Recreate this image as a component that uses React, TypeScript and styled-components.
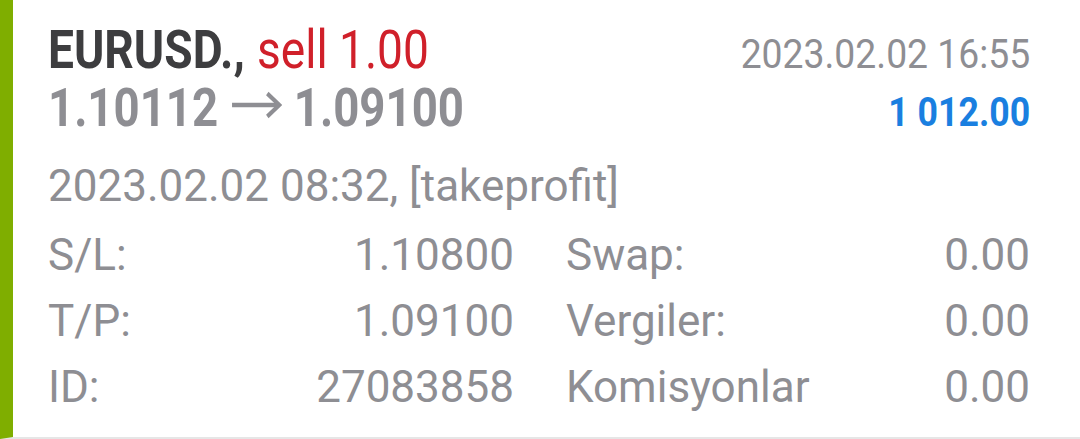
import * as React from "react"
import styled, { createGlobalStyle } from "styled-components"

const GlobalStyle = createGlobalStyle`
  html, body {
    margin: 0;
    padding: 0;
    background: #ffffff;
  }
  body {
    font-family: Roboto, "Liberation Sans", sans-serif;
  }
`

const Card = styled.div`
  box-sizing: border-box;
  height: 439px;
  width: 1080px;
  border-left: 13px solid #7fae00;
  border-bottom: 2px solid #e6e6e6;
  padding: 21px 50px 0 35px;
  background: #fff;
`

const HeadRow = styled.div`
  display: flex;
  justify-content: space-between;
  align-items: baseline;
  height: 58px;
`

// condensed look: Roboto squeezed horizontally
const Condensed = styled.span<{ $size: number; $scale: number; $right?: boolean }>`
  display: inline-block;
  white-space: nowrap;
  font-size: ${p => p.$size}px;
  line-height: 58px;
  transform: scaleX(${p => p.$scale});
  transform-origin: ${p => (p.$right ? "right" : "left")} center;
`

const Symbol = styled.span`
  font-weight: 700;
  color: #3d3d3f;
`

const Side = styled.span`
  font-weight: 400;
  color: #d0202a;
  margin-left: 14px;
`

const Prices = styled.span`
  font-weight: 700;
  color: #8e8e93;
`

const ArrowIcon = styled.svg`
  width: 58px;
  height: 42px;
  margin: 0 14px 0 16px;
  vertical-align: baseline;
`

const Time = styled.span`
  font-weight: 400;
  color: #8e8e93;
`

const Profit = styled.span`
  font-weight: 700;
  color: #1a7fe0;
`

const CloseInfo = styled.div`
  margin-top: 16px;
  font-size: 44px;
  line-height: 66px;
  color: #8e8e93;
  white-space: nowrap;
`

const Details = styled.div`
  margin-top: 3px;
  display: grid;
  grid-template-columns: 466px 1fr;
  column-gap: 52px;
  font-size: 44px;
  line-height: 66px;
  color: #8e8e93;
`

const Pair = styled.div`
  display: flex;
  justify-content: space-between;
  white-space: nowrap;
`

const details: Array<[string, string, string, string]> = [
  ["S/L:", "1.10800", "Swap:", "0.00"],
  ["T/P:", "1.09100", "Vergiler:", "0.00"],
  ["ID:", "27083858", "Komisyonlar", "0.00"],
]

function Arrow() {
  return (
    <ArrowIcon viewBox="0 0 58 42" fill="none" stroke="currentColor" strokeWidth={4.5}>
      <path d="M0 21H55" />
      <path d="M41 9.5L55 21L41 32.5" strokeLinejoin="miter" />
    </ArrowIcon>
  )
}

export default function App() {
  return (
    <>
      <GlobalStyle />
      <Card>
        <HeadRow>
          <Condensed $size={53} $scale={0.87}>
            <Symbol>EURUSD.,</Symbol>
            <Side>sell 1.00</Side>
          </Condensed>
          <Condensed $size={41} $scale={0.91} $right>
            <Time>2023.02.02 16:55</Time>
          </Condensed>
        </HeadRow>
        <HeadRow>
          <Condensed $size={53} $scale={0.86}>
            <Prices>
              1.10112<Arrow />1.09100
            </Prices>
          </Condensed>
          <Condensed $size={41} $scale={0.87} $right>
            <Profit>1 012.00</Profit>
          </Condensed>
        </HeadRow>
        <CloseInfo>2023.02.02 08:32, [takeprofit]</CloseInfo>
        <Details>
          {details.map(([l1, v1, l2, v2]) => (
            <React.Fragment key={l1}>
              <Pair>
                <span>{l1}</span>
                <span>{v1}</span>
              </Pair>
              <Pair>
                <span>{l2}</span>
                <span>{v2}</span>
              </Pair>
            </React.Fragment>
          ))}
        </Details>
      </Card>
    </>
  )
}
